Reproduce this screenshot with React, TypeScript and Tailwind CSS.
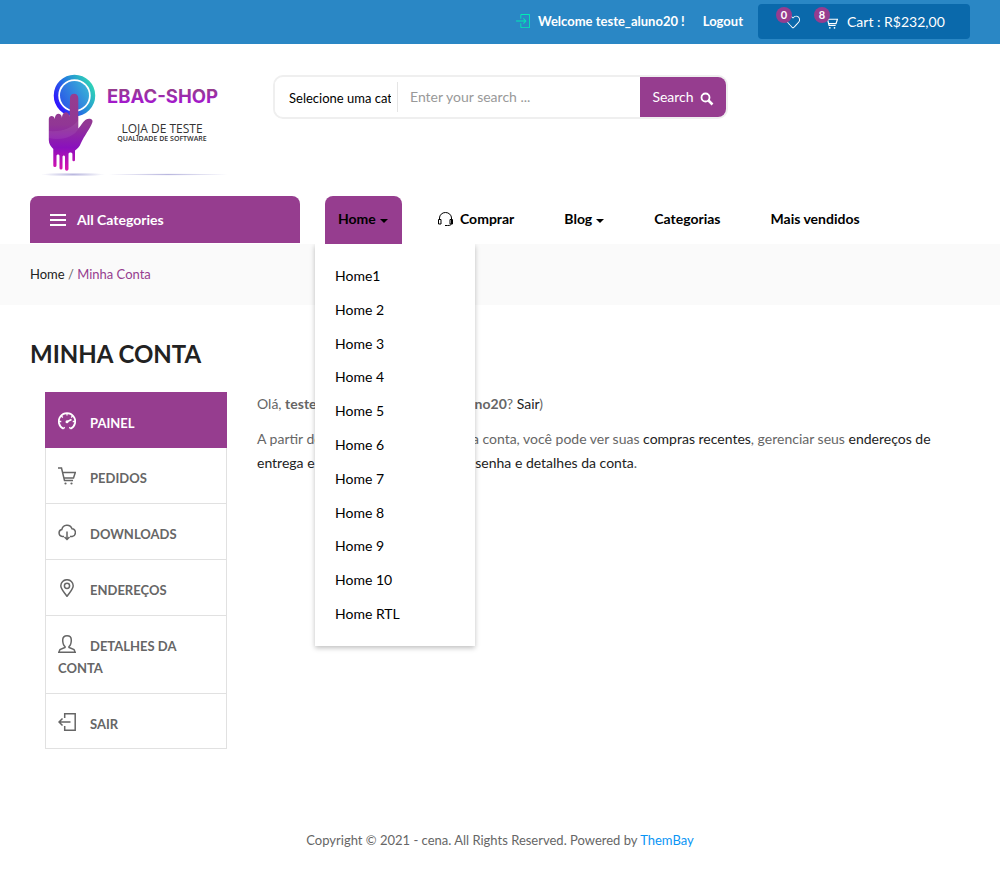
import type { ReactNode } from "react";
import { SlHeart, SlLogin } from "react-icons/sl";

const homePages = [
  "Home1",
  "Home 2",
  "Home 3",
  "Home 4",
  "Home 5",
  "Home 6",
  "Home 7",
  "Home 8",
  "Home 9",
  "Home 10",
  "Home RTL",
];

function LineIcon({ children, className }: { children: ReactNode; className: string }) {
  return (
    <svg viewBox="0 0 18 18" className={className} fill="none" stroke="currentColor" strokeWidth="1.5" aria-hidden="true">
      {children}
    </svg>
  );
}

function CartShape() {
  return (
    <>
      <path d="M0 1h3.500l3 12.500h8.500M5 5.500h12.300L15.500 11H6.200" />
      <circle cx="7.500" cy="16.500" r="1.100" fill="currentColor" stroke="none" />
      <circle cx="13.500" cy="16.500" r="1.100" fill="currentColor" stroke="none" />
    </>
  );
}

const accountLinks: { label: string; icon: ReactNode }[] = [
  {
    label: "PAINEL",
    icon: (
      <>
        <path d="M5.500 16.800A8.200 8.200 0 1 1 12.500 16.800" strokeWidth="1.800" />
        <path d="M9 1v2.500M1 9.500h2.300M17 9.500h-2.300M3.300 4l1.500 1.500M14.700 4l-1.500 1.500M5.500 17l1-2M12.500 17l-1-2" strokeWidth="1.300" />
        <path d="M9 9.700l4.500-2.200" strokeWidth="1.600" />
        <circle cx="9" cy="9.700" r="1.500" fill="currentColor" stroke="none" />
      </>
    ),
  },
  { label: "PEDIDOS", icon: <CartShape /> },
  {
    label: "DOWNLOADS",
    icon: (
      <>
        <path d="M6 13.500H4.300a3.500 3.500 0 0 1-.5-6.900A5.300 5.300 0 0 1 14 5.800a3.900 3.900 0 0 1 .2 7.700H12" />
        <path d="M9 8.500v7.800M6.500 14l2.500 2.500 2.500-2.500" />
      </>
    ),
  },
  {
    label: "ENDEREÇOS",
    icon: (
      <>
        <path d="M9 17.300C6 13 2.800 10 2.800 6.700a6.200 6 0 0 1 12.400 0C15.200 10 12 13 9 17.300z" />
        <circle cx="9" cy="6.800" r="2.600" />
      </>
    ),
  },
  {
    label: "DETALHES DA CONTA",
    icon: (
      <path d="M7 11.500C5 10 4.700 7 4.700 5c0-2.800 1.600-4.200 4.300-4.200S13.300 2.200 13.300 5c0 2-.3 5-2.300 6.500v1l5 2 1.200 2.700H.8L2 14.500l5-2z" />
    ),
  },
  {
    label: "SAIR",
    icon: (
      <>
        <path d="M6.700 5V.8h10.500v16.400H6.700V13" />
        <path d="M12.500 9H1M4.500 5.500L1 9l3.500 3.500" />
      </>
    ),
  },
];

function Caret() {
  return (
    <svg viewBox="0 0 8 4" className="mt-1 ml-1 h-1 w-2" aria-hidden="true">
      <path d="M0 0h8L4 4z" fill="currentColor" />
    </svg>
  );
}

function Logo() {
  return (
    <svg viewBox="0 0 210 125" className="h-[125px] w-[210px]" role="img" aria-label="EBAC-SHOP">
      <defs>
        <linearGradient id="ring" x1="0" y1="0.75" x2="1" y2="0.2">
          <stop offset="0" stopColor="#2f10ff" />
          <stop offset="0.5" stopColor="#2483dc" />
          <stop offset="1" stopColor="#2fd6b6" />
        </linearGradient>
        <linearGradient id="disc" x1="0" y1="0.8" x2="1" y2="0.2">
          <stop offset="0" stopColor="#2a55e8" />
          <stop offset="1" stopColor="#39b4d6" />
        </linearGradient>
        <linearGradient id="hand" x1="0" y1="0" x2="0" y2="1">
          <stop offset="0" stopColor="#963d8f" />
          <stop offset="0.4" stopColor="#913794" />
          <stop offset="0.7" stopColor="#8a10bd" />
          <stop offset="1" stopColor="#dc12ae" />
        </linearGradient>
        <linearGradient id="brand" x1="0" y1="0" x2="0" y2="1">
          <stop offset="0.2" stopColor="#963d8f" />
          <stop offset="0.9" stopColor="#a512d6" />
        </linearGradient>
        <radialGradient id="shade">
          <stop offset="0" stopColor="#b9b7df" />
          <stop offset="1" stopColor="#b9b7df" stopOpacity="0" />
        </radialGradient>
      </defs>
      <ellipse cx="43" cy="114.500" rx="32" ry="2" fill="url(#shade)" />
      <ellipse cx="138" cy="114.500" rx="60" ry="1.200" fill="url(#shade)" />
      <circle cx="44.500" cy="35.500" r="18.500" fill="none" stroke="url(#ring)" strokeWidth="4.500" />
      <circle cx="44.500" cy="35.500" r="14.500" fill="url(#disc)" />
      <path
        d="M40 38c0-5.700 8.300-5.700 8.300 0v30.500c2.500-2 4-6.500 7-8.500 3-2 8.500-1.500 7 2.500C60 69 54 76 51 83c-1.500 4-4 6-6 7.500V100a1.300 1.300 0 0 1-2.600 0v-6c0-2-3.900-2-3.900 0v15a1.700 1.700 0 0 1-3.500 0V97c0-2-2.500-2-2.500 0v11a1.500 1.500 0 0 1-3 0V96c0-2-3-2-3 0v9.500a1.600 1.600 0 0 1-3.200 0V89c-2.500-3-4.500-5-4.500-9V59c0-4 5.500-4 6 0 0-6.500 6.500-7 7.200-1 0-7 6.500-8 7.500-1.500z"
        fill="url(#hand)"
      />
      <path d="M18.300 78V71c15 1 24-3 30-11v9c-4 7-14 12-30 9z" fill="#fff" opacity=".07" />
      <text x="77" y="43" fontSize="18.500" fontWeight="700" fontFamily="Inter, sans-serif" fill="url(#brand)">
        EBAC-SHOP
      </text>
      <text x="132" y="73" textAnchor="middle" fontSize="12" fontFamily="'Open Sans', sans-serif" fill="#333">
        LOJA DE TESTE
      </text>
      <text x="132" y="81" textAnchor="middle" fontSize="7" fontWeight="600" fontFamily="'Open Sans', sans-serif" fill="#333">
        QUALIDADE DE SOFTWARE
      </text>
    </svg>
  );
}

function CountBadge({ count }: { count: number }) {
  return (
    <span className="absolute -top-2 -left-[10px] grid size-4 place-items-center rounded-full bg-[#963d8f] text-[11px] leading-none font-bold">
      {count}
    </span>
  );
}

function TopBar() {
  return (
    <div className="flex h-11 items-start justify-end bg-[#2a87c5] px-[30px] pt-1 text-white">
      <div className="flex h-[34px] items-center text-[13px] font-bold">
        <SlLogin className="mr-2 size-[14px] text-[#00ecb4]" />
        <span>Welcome teste_aluno20 !</span>
        <a href="#logout" className="ml-[18px]">
          Logout
        </a>
      </div>
      <div className="ml-[15px] flex h-[35px] w-[212px] items-center rounded bg-[#0a69ab] pl-7 text-sm">
        <a href="#wishlist" aria-label="Wishlist" className="relative">
          <SlHeart className="size-[14px]" />
          <CountBadge count={0} />
        </a>
        <a href="#cart" className="ml-6 flex items-center">
          <span className="relative">
            <LineIcon className="size-[14px]">
              <CartShape />
            </LineIcon>
            <CountBadge count={8} />
          </span>
          <span className="ml-[9px]">Cart : R$232,00</span>
        </a>
      </div>
    </div>
  );
}

function SearchForm() {
  return (
    <form
      className="mt-[31px] flex h-11 w-[455px] overflow-hidden rounded-[10px] border-2 border-[#efefef]"
      onSubmit={(e) => e.preventDefault()}
    >
      <select
        aria-label="Categoria"
        className="my-[5px] w-[123px] appearance-none border-r border-[#e5e5e5] bg-white pt-[2px] pr-[6px] pl-[14px] text-[13px] text-black"
      >
        <option>Selecione uma categoria</option>
      </select>
      <input
        type="text"
        aria-label="Search"
        placeholder="Enter your search ..."
        className="min-w-0 flex-1 px-3 text-sm placeholder:text-[#999]"
      />
      <button type="submit" className="flex w-[86px] items-center justify-center gap-[6px] bg-[#963d8f] text-sm text-white">
        Search
        <svg viewBox="0 0 14 14" className="mt-1 size-[14px]" fill="none" stroke="currentColor" aria-hidden="true">
          <circle cx="5.500" cy="5.500" r="4" strokeWidth="1.800" />
          <path d="M8.500 8.500l4 4" strokeWidth="2.500" />
        </svg>
      </button>
    </form>
  );
}

function NavBar() {
  return (
    <div className="flex h-12 px-[30px] text-sm font-bold">
      <button type="button" className="flex h-[47px] w-[270px] items-center rounded-t-lg bg-[#963d8f] pl-5 font-bold text-white">
        <svg viewBox="0 0 16 12" className="mr-[11px] h-3 w-4" fill="currentColor" aria-hidden="true">
          <path d="M0 0h16v2H0zM0 5h16v2H0zM0 10h16v2H0z" />
        </svg>
        All Categories
      </button>
      <nav className="ml-[25px] flex text-black">
        <div className="relative">
          <a href="#home" className="flex h-12 w-[77px] items-center rounded-t-lg bg-[#963d8f] pb-[2px] pl-[13px]">
            Home <Caret />
          </a>
          <ul className="absolute top-full -left-[10px] z-10 flex h-[402px] w-40 flex-col bg-white py-[15px] font-normal shadow-[0_2px_5px_rgba(0,0,0,0.25)] [clip-path:inset(0_-8px_-8px_-8px)]">
            {homePages.map((page) => (
              <li key={page} className="flex flex-1 items-center px-5">
                <a href="#home">{page}</a>
              </li>
            ))}
          </ul>
        </div>
        <a href="#comprar" className="ml-9 flex items-center pb-[2px]">
          <svg viewBox="0 0 15 15" className="mr-[7px] size-[15px]" fill="none" stroke="currentColor" aria-hidden="true">
            <path d="M1.500 7V6a6 5.500 0 0 1 12 0v5c0 2-1.500 2.500-4 2.500H7" />
            <path d="M.5 7.500H3v4.500H.5zM12 7.500h2.500v4.500H12z" />
          </svg>
          Comprar
        </a>
        <a href="#blog" className="ml-[50px] flex items-center pb-[2px]">
          Blog <Caret />
        </a>
        <a href="#categorias" className="ml-[50px] flex items-center pb-[2px]">
          Categorias
        </a>
        <a href="#mais-vendidos" className="ml-[50px] flex items-center pb-[2px]">
          Mais vendidos
        </a>
      </nav>
    </div>
  );
}

function AccountMenu() {
  return (
    <nav className="w-[182px] shrink-0 border border-t-0 border-[#e1e1e1] font-bold text-[#666]">
      {accountLinks.map(({ label, icon }, i) => (
        <a
          key={label}
          href="#conta"
          className={
            i === 0
              ? "-mx-px block bg-[#963d8f] pt-5 pr-10 pb-[14px] pl-[13px] text-[13px] leading-[22px] text-white"
              : "block border-b border-[#e1e1e1] pt-[19px] pr-10 pb-[14px] pl-3 text-[13px] leading-[22px] last:border-b-0 last:pb-[13px]"
          }
        >
          <span className="mr-[14px] inline-block align-middle">
            <LineIcon className="-mt-2 size-[18px]">{icon}</LineIcon>
          </span>
          {label}
        </a>
      ))}
    </nav>
  );
}

export default function App() {
  return (
    <div className="min-h-screen bg-white font-[Lato,sans-serif] text-sm text-[#666]">
      <header>
        <TopBar />
        <div className="flex h-[152px] items-start pl-[30px]">
          <div className="pt-4">
            <Logo />
          </div>
          <div className="ml-[33px]">
            <SearchForm />
          </div>
        </div>
        <NavBar />
      </header>
      <div className="flex h-[61px] items-center bg-[#fafafa] px-[30px] text-[13px]">
        <p>
          <a href="#home" className="text-[#222]">
            Home
          </a>{" "}
          / <span className="text-[#963d8f]">Minha Conta</span>
        </p>
      </div>
      <main className="px-[30px] pt-8">
        <h1 className="text-2xl leading-[34px] font-bold text-[#222]">MINHA CONTA</h1>
        <div className="mt-[21px] flex items-start pl-[15px]">
          <AccountMenu />
          <section className="flex-1 pr-[15px] pl-[30px] leading-6">
            <p>
              Olá, <strong>teste_aluno20</strong> (não é <strong>teste_aluno20</strong>?{" "}
              <a href="#sair" className="text-[#222]">
                Sair
              </a>
              )
            </p>
            <p className="mt-[11px]">
              A partir do painel de controle de sua conta, você pode ver suas{" "}
              <a href="#compras" className="text-[#222]">
                compras recentes
              </a>
              , gerenciar seus{" "}
              <a href="#enderecos" className="text-[#222]">
                endereços de entrega e faturamento
              </a>
              , e{" "}
              <a href="#detalhes" className="text-[#222]">
                editar sua senha e detalhes da conta
              </a>
              .
            </p>
          </section>
        </div>
      </main>
      <footer className="pt-[82px] pb-9 text-center text-[13px]">
        Copyright © 2021 - cena. All Rights Reserved. Powered by{" "}
        <a href="#thembay" className="text-[#0a95f5]">
          ThemBay
        </a>
      </footer>
    </div>
  );
}
